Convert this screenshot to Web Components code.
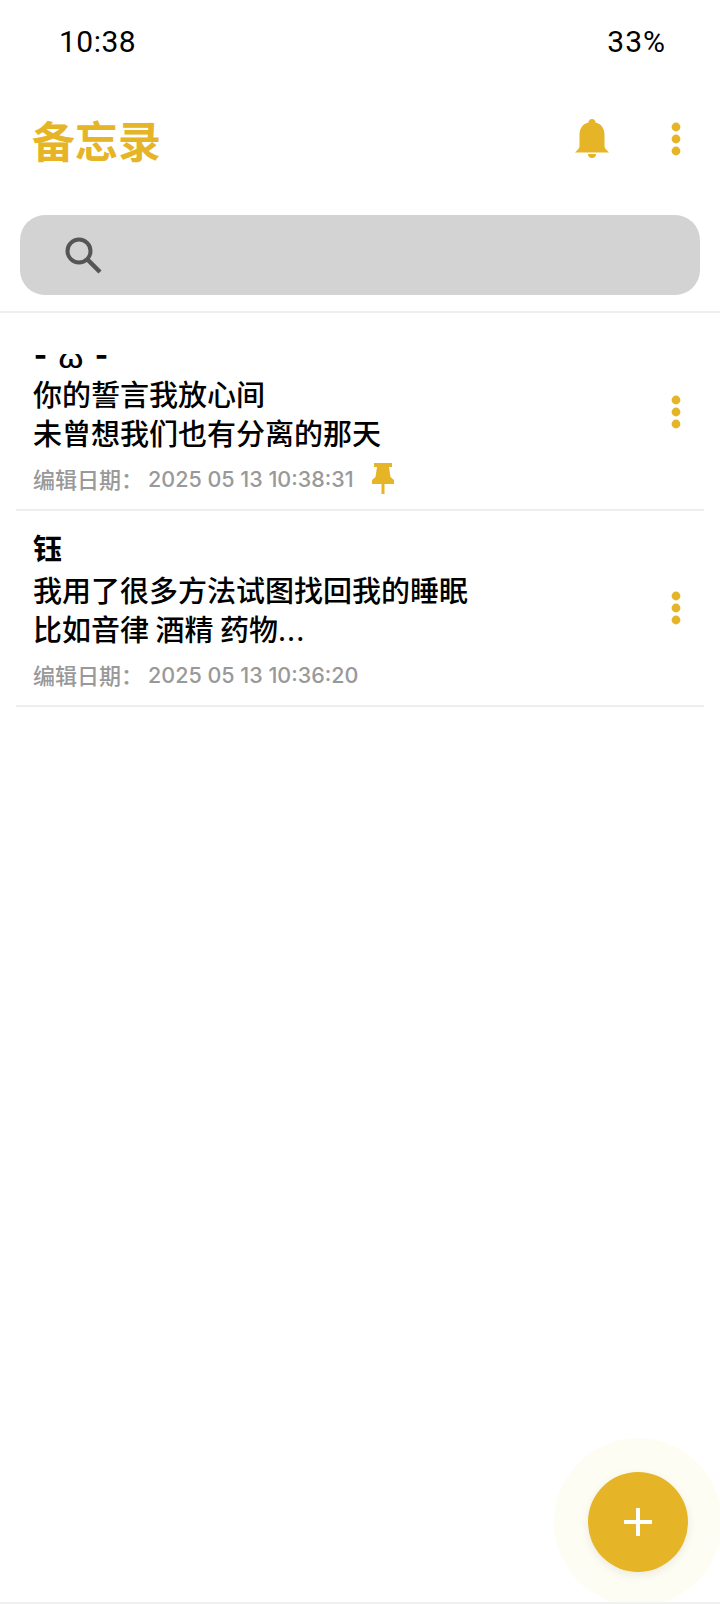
<!DOCTYPE html>
<html lang="zh">
<head>
<meta charset="utf-8">
<title>备忘录</title>
<style>
html, body { margin: 0; padding: 0; background: #fff; }
body { font-family: "Noto Sans CJK SC", "Noto Sans", sans-serif; }
.dots { font-weight: 400; letter-spacing: 1px; }
</style>
</head>
<body>
<memo-app>
  <status-bar time="10:38" battery="33%"></status-bar>
  <app-header title="备忘录"></app-header>
  <search-bar></search-bar>
  <note-list>
    <note-item date="2025 05 13 10:38:31" pinned><kao-moji slot="head"></kao-moji>你的誓言我放心间<br>未曾想我们也有分离的那天</note-item>
    <note-item date="2025 05 13 10:36:20"><span slot="head">钰</span>我用了很多方法试图找回我的睡眠<br>比如音律 酒精 药物<span class="dots">...</span></note-item>
  </note-list>
  <add-button></add-button>
</memo-app>

<script>
class MemoApp extends HTMLElement {
    constructor() {
        super();
        this.attachShadow({ mode: 'open' });
        this.shadowRoot.innerHTML = `
        <style>
        :host {
            display: flex;
            flex-direction: column;
            position: relative;
            width: 720px;
            height: 1604px;
            overflow: hidden;
            background: #fff;
            box-sizing: border-box;
            border-bottom: 2px solid #f1f1f1;
        }
        </style>
        <slot></slot>`;
    }
}
customElements.define('memo-app', MemoApp);

class StatusBar extends HTMLElement {
    constructor() {
        super();
        this.attachShadow({ mode: 'open' });
        this.shadowRoot.innerHTML = `
        <style>
        :host {
            display: flex;
            align-items: center;
            justify-content: space-between;
            height: 82px;
            padding: 0 54px 2px 59px;
            font: 400 30px Roboto, sans-serif;
            color: #000;
        }
        .time { letter-spacing: .5px; }
        .battery { letter-spacing: 1px; }
        </style>
        <span class="time">${this.getAttribute('time')}</span>
        <span class="battery">${this.getAttribute('battery')}</span>`;
    }
}
customElements.define('status-bar', StatusBar);

class KebabIcon extends HTMLElement {
    constructor() {
        super();
        this.attachShadow({ mode: 'open' });
        this.shadowRoot.innerHTML = `
        <style>
        :host { display: block; width: 10px; height: 34px; }
        svg { display: block; }
        </style>
        <svg width="10" height="34" viewBox="0 0 10 34" fill="#e5b527">
            <circle cx="5" cy="5" r="4.4"/>
            <circle cx="5" cy="17" r="4.4"/>
            <circle cx="5" cy="29" r="4.4"/>
        </svg>`;
    }
}
customElements.define('kebab-icon', KebabIcon);

class AppHeader extends HTMLElement {
    constructor() {
        super();
        this.attachShadow({ mode: 'open' });
        this.shadowRoot.innerHTML = `
        <style>
        :host {
            display: flex;
            align-items: center;
            height: 110px;
            padding: 0 39px 6px 32px;
        }
        h1 {
            margin: 0;
            flex: 1;
            font: 700 43px/1 "Noto Sans CJK SC", sans-serif;
            color: #e5b527;
        }
        .bell { display: block; margin-right: 62px; }
        </style>
        <h1>${this.getAttribute('title')}</h1>
        <svg class="bell" width="34" height="40" viewBox="0 0 34 40" fill="#e5b527">
            <path d="M17 0a3.6 3.6 0 0 1 3.5 3.4C27 5 29.500 10 29.500 16v11c0 2 1.500 3.500 4.500 6.500H0C3 30.500 4.500 29 4.500 27V16C4.500 10 7 5 13.500 3.400A3.600 3.600 0 0 1 17 0z"/>
            <path d="M13 35h8a4 4 0 0 1-8 0z"/>
        </svg>
        <kebab-icon></kebab-icon>`;
    }
}
customElements.define('app-header', AppHeader);

class SearchBar extends HTMLElement {
    constructor() {
        super();
        this.attachShadow({ mode: 'open' });
        this.shadowRoot.innerHTML = `
        <style>
        :host {
            display: block;
            padding: 15px 20px 16px;
            border-bottom: 2px solid #eeeeee;
        }
        .box {
            display: flex;
            align-items: center;
            height: 80px;
            padding-left: 45px;
            background: #d3d3d3;
            border-radius: 25px;
        }
        svg { display: block; }
        </style>
        <div class="box">
            <svg width="37" height="37" viewBox="0 0 37 37" fill="none" stroke="#555" stroke-width="4">
                <circle cx="14" cy="14" r="11.500"/>
                <path d="M22.500 22.500L35 35" stroke-width="4.500"/>
            </svg>
        </div>`;
    }
}
customElements.define('search-bar', SearchBar);

class NoteList extends HTMLElement {
    constructor() {
        super();
        this.attachShadow({ mode: 'open' });
        this.shadowRoot.innerHTML = `
        <style>
        :host {
            display: flex;
            flex-direction: column;
            padding: 2px 16px 0;
        }
        </style>
        <slot></slot>`;
    }
}
customElements.define('note-list', NoteList);

// the "- w -" title of the first note, its mouth is a wider, thinner glyph than the dashes
class KaoMoji extends HTMLElement {
    constructor() {
        super();
        this.attachShadow({ mode: 'open' });
        this.shadowRoot.innerHTML = `
        <style>
        :host { display: inline-flex; align-items: baseline; gap: 13px; margin-left: 1px; }
        .dash { font-size: 35px; line-height: 39px; }
        .mouth {
            display: inline-block;
            font: 500 27px/39px Inter, sans-serif;
            transform: scale(1.15, .92);
            transform-origin: center bottom;
        }
        </style>
        <span class="dash">-</span><span class="mouth">ω</span><span class="dash">-</span>`;
    }
}
customElements.define('kao-moji', KaoMoji);

class NoteItem extends HTMLElement {
    constructor() {
        super();
        this.attachShadow({ mode: 'open' });
        const pin = this.hasAttribute('pinned') ? `
            <svg class="pin" width="22" height="31" viewBox="0 0 22 31" fill="#e5b527">
                <path d="M2 0h18v4h-3l1.500 10 3.500 3v4H0v-4l3.500-3L5 4H2z"/>
                <rect x="9.500" y="20" width="3" height="11"/>
            </svg>` : '';
        this.shadowRoot.innerHTML = `
        <style>
        :host {
            display: flex;
            align-items: center;
            justify-content: space-between;
            height: 194px;
            padding: 0 23px 0 17px;
            border-bottom: 2px solid #eeeeee;
            color: #000;
        }
        .text { align-self: flex-start; padding-top: 17px; }
        .head {
            height: 39px;
            margin-bottom: 3px;
            font: 700 29px/39px "Noto Sans CJK SC", sans-serif;
        }
        .body {
            font: 500 29px/39px "Noto Sans CJK SC", sans-serif;
        }
        .meta {
            display: flex;
            align-items: center;
            height: 32px;
            margin-top: 11px;
            font: 500 21.500px/32px Inter, sans-serif;
            color: #999;
        }
        .label {
            width: 115px;
            flex: none;
            padding-bottom: 2px;
            white-space: nowrap;
            font: 500 22px/30px "Noto Sans CJK SC", sans-serif;
        }
        .date { white-space: nowrap; }
        .pin { margin: 0 0 2px 18px; flex: none; }
        </style>
        <div class="text">
            <div class="head"><slot name="head"></slot></div>
            <div class="body"><slot></slot></div>
            <div class="meta"><span class="label">编辑日期：</span><span class="date">${this.getAttribute('date')}</span>${pin}</div>
        </div>
        <kebab-icon></kebab-icon>`;
    }
}
customElements.define('note-item', NoteItem);

class AddButton extends HTMLElement {
    constructor() {
        super();
        this.attachShadow({ mode: 'open' });
        this.shadowRoot.innerHTML = `
        <style>
        :host {
            position: absolute;
            left: 554px;
            top: 1438px;
            width: 168px;
            height: 168px;
            display: flex;
            align-items: center;
            justify-content: center;
            border-radius: 50%;
            background: #fefdf3;
        }
        .fab {
            width: 100px;
            height: 100px;
            border-radius: 50%;
            display: flex;
            align-items: center;
            justify-content: center;
            background: #e5b527;
            box-shadow: 0 3px 10px rgba(0,0,0,.08);
        }
        svg { display: block; }
        </style>
        <div class="fab">
            <svg width="28" height="28" viewBox="0 0 28 28" fill="#fff">
                <rect x="12" y="0" width="4" height="28"/>
                <rect x="0" y="12" width="28" height="4"/>
            </svg>
        </div>`;
    }
}
customElements.define('add-button', AddButton);
</script>
</body>
</html>
